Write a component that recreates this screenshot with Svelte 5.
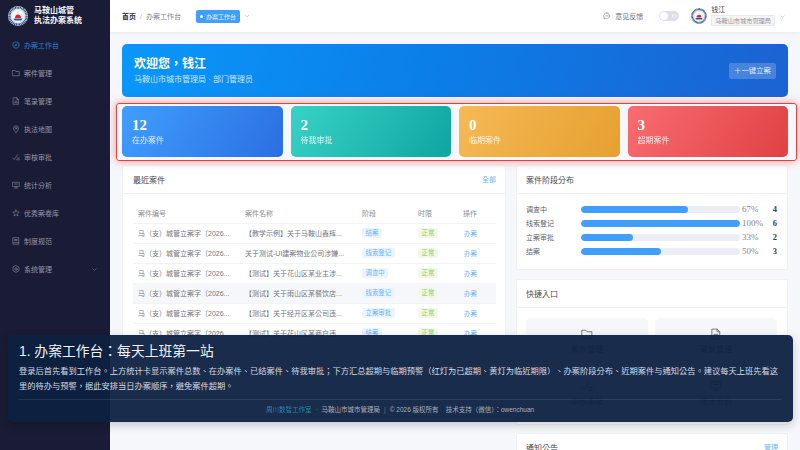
<script>
  const nav = [
    { label: '办案工作台', icon: 'gauge', active: true },
    { label: '案件管理', icon: 'folder' },
    { label: '笔录管理', icon: 'doc' },
    { label: '执法地图', icon: 'pin' },
    { label: '审核审批', icon: 'check' },
    { label: '统计分析', icon: 'chart' },
    { label: '优秀案卷库', icon: 'star' },
    { label: '制度规范', icon: 'book' },
    { label: '系统管理', icon: 'gear', arrow: true }
  ];

  const stats = [
    { value: 12, label: '在办案件', tone: 'blue' },
    { value: 2, label: '待我审批', tone: 'teal' },
    { value: 0, label: '临期案件', tone: 'orange' },
    { value: 3, label: '超期案件', tone: 'red' }
  ];

  const cases = [
    { name: '【教学示例】关于马鞍山鑫辉...', stage: '结案' },
    { name: '关于测试-UI建案物业公司涉嫌...', stage: '线索登记' },
    { name: '【测试】关于花山区某业主涉...', stage: '调查中' },
    { name: '【测试】关于雨山区某餐饮店...', stage: '线索登记', hover: true },
    { name: '【测试】关于经开区某公司违...', stage: '立案审批' },
    { name: '【测试】关于花山区某商户违...', stage: '结案' }
  ];

  const stages = [
    { label: '调查中', pct: 67, count: 4 },
    { label: '线索登记', pct: 100, count: 6 },
    { label: '立案审批', pct: 33, count: 2 },
    { label: '结案', pct: 50, count: 3 }
  ];

  const quick = [
    { label: '案件管理', icon: 'folder' },
    { label: '笔录管理', icon: 'doc' },
    { label: '审核审批', icon: 'check' },
    { label: '统计分析', icon: 'chart' }
  ];
</script>

{#snippet icon(name)}
  <svg viewBox="0 0 16 16" fill="none" stroke="currentColor" stroke-width="1.1" stroke-linejoin="round" stroke-linecap="round">
    {#if name === 'gauge'}
      <circle cx="8" cy="8" r="6.5" stroke-width="1.4" />
      <path d="M5 11 L10.5 5 M8 9.5 a1.3 1.3 0 1 0 -1.6 -1.4" stroke-width="1.3" />
    {:else if name === 'folder'}
      <path d="M1.5 3 H6.5 L8 5 H14.5 V13.5 H1.5 Z" />
    {:else if name === 'doc'}
      <path d="M3 1.5 H9.5 L13 5 V14.5 H3 Z M9.5 1.5 V5 H13" />
      <path d="M5.5 8.5 H10.5 M5.5 11 H10.5" />
    {:else if name === 'pin'}
      <path d="M8 14.8 C5 11.5 3 9.2 3 6.5 A5 5 0 0 1 13 6.5 C13 9.2 11 11.5 8 14.8 Z" />
      <circle cx="8" cy="6.5" r="1.8" />
    {:else if name === 'check'}
      <path d="M1.5 10 L4.5 13 L11 3.5 M9 13.5 H15 M11 10 H15" />
    {:else if name === 'chart'}
      <path d="M1.5 2.5 H14.5 V11 H1.5 Z M5 14 H11 M8 11 V14 M4.5 6 H11.5" />
    {:else if name === 'star'}
      <path d="M8 1.8 L9.9 5.9 L14.4 6.4 L11.1 9.4 L12 13.9 L8 11.7 L4 13.9 L4.9 9.4 L1.6 6.4 L6.1 5.9 Z" />
    {:else if name === 'book'}
      <path d="M2.5 1.5 H13.5 V14.5 H2.5 Z M2.5 11.5 H13.5 M5.5 5 H10.5 V7.5 H5.5 Z" />
    {:else if name === 'gear'}
      <path d="M8 1.2 L14 4.6 V11.4 L8 14.8 L2 11.4 V4.6 Z" />
      <circle cx="8" cy="8" r="2.5" />
    {:else if name === 'chat'}
      <path d="M8 2 A6 5.6 0 1 1 4.6 12.6 L2 14 L2.6 11 A6 5.6 0 0 1 8 2 Z M5.2 7.8 H10.8" />
    {/if}
  </svg>
{/snippet}

{#snippet chevron()}
  <svg class="chevron" viewBox="0 0 10 6" fill="none" stroke="currentColor" stroke-width="0.9"><path d="M1 1 L5 5 L9 1" /></svg>
{/snippet}

{#snippet emblem()}
  <svg viewBox="0 0 40 40">
    <circle cx="20" cy="20" r="20" fill="#dfe6ee" />
    <circle cx="20" cy="20" r="17" fill="none" stroke="#2a4a78" stroke-width="4.5" stroke-dasharray="2 1.2" />
    <circle cx="20" cy="20" r="12" fill="#f4f6f8" />
    <path d="M11 25 H29 L27 29 H13 Z" fill="#2a5a96" />
    <path d="M14 24 A6 7 0 0 1 26 24 Z" fill="#d8262c" />
    <path d="M20 11 L21 13.5 H19 Z" fill="#e6b422" />
  </svg>
{/snippet}

<div class="app">
  <aside class="sidebar">
    <div class="brand">
      <span class="logo">{@render emblem()}</span>
      <div class="brand-name">马鞍山城管<br />执法办案系统</div>
    </div>
    <nav>
      {#each nav as item}
        <div class="nav-item" class:active={item.active}>
          <span class="nav-icon">{@render icon(item.icon)}</span>
          <span>{item.label}</span>
          {#if item.arrow}<span class="nav-arrow">{@render chevron()}</span>{/if}
        </div>
      {/each}
    </nav>
  </aside>

  <div class="main">
    <header class="topbar">
      <div class="crumbs">
        <b>首页</b><i>/</i><span>办案工作台</span>
      </div>
      <div class="tab"><em></em>办案工作台</div>
      <span class="tab-arrow">{@render chevron()}</span>
      <div class="top-right">
        <span class="feedback"><span class="chat">{@render icon('chat')}</span>意见反馈</span>
        <span class="switch"><em></em><u></u></span>
        <span class="avatar">{@render emblem()}</span>
        <div class="user">
          <div class="user-name">钱江</div>
          <div class="user-org">马鞍山市城市管理局</div>
        </div>
        <span class="user-arrow">{@render chevron()}</span>
      </div>
    </header>

    <main class="content">
      <section class="banner">
        <div>
          <h1>欢迎您，钱江</h1>
          <p>马鞍山市城市管理局 · 部门管理员</p>
        </div>
        <div class="banner-btn">＋一键立案</div>
      </section>

      <section class="stats">
        {#each stats as s}
          <div class="stat {s.tone}">
            <strong>{s.value}</strong>
            <span>{s.label}</span>
          </div>
        {/each}
      </section>

      <div class="columns">
        <section class="card recent">
          <div class="card-head"><span>最近案件</span><a href="#all">全部</a></div>
          <div class="table-wrap">
            <table>
              <thead>
                <tr><th>案件编号</th><th>案件名称</th><th>阶段</th><th>时限</th><th>操作</th></tr>
              </thead>
              <tbody>
                {#each cases as c}
                  <tr class:hover={c.hover}>
                    <td>马（支）城管立案字〔2026...</td>
                    <td>{c.name}</td>
                    <td><span class="tag">{c.stage}</span></td>
                    <td><span class="tag ok">正常</span></td>
                    <td><span class="link">办案</span></td>
                  </tr>
                {/each}
              </tbody>
            </table>
          </div>
        </section>

        <div class="side">
          <section class="card dist">
            <div class="card-head"><span>案件阶段分布</span></div>
            <div class="bars">
              {#each stages as b}
                <div class="bar-row">
                  <span class="bar-label">{b.label}</span>
                  <span class="track"><span class="fill" style="width: {b.pct}%"></span></span>
                  <span class="pct">{b.pct}%</span>
                  <b>{b.count}</b>
                </div>
              {/each}
            </div>
          </section>

          <section class="card quick">
            <div class="card-head"><span>快捷入口</span></div>
            <div class="quick-grid">
              {#each quick as q}
                <div class="quick-item">
                  <span class="quick-icon">{@render icon(q.icon)}</span>
                  <span>{q.label}</span>
                </div>
              {/each}
            </div>
          </section>

          <section class="card notice">
            <div class="card-head"><span>通知公告</span><a href="#manage">管理</a></div>
          </section>
        </div>
      </div>
    </main>
  </div>

  <div class="tour">
    <h2>1. 办案工作台：每天上班第一站</h2>
    <p>登录后首先看到工作台。上方统计卡显示案件总数、在办案件、已结案件、待我审批；下方汇总超期与临期预警（红灯为已超期、黄灯为临近期限）、办案阶段分布、近期案件与通知公告。建议每天上班先看这里的待办与预警，据此安排当日办案顺序，避免案件超期。</p>
    <footer>
      <span class="studio">周川数智工作室</span><span class="sep">·</span>马鞍山市城市管理局<span class="sep">|</span>© 2026 版权所有<span class="gap"></span>技术支持（微信）：owenchuan
    </footer>
  </div>
</div>

<style>
  :global(body) {
    margin: 0;
    background: #f5f7fb;
  }

  .app {
    position: relative;
    display: grid;
    grid-template-columns: 110px 1fr;
    width: 800px;
    height: 450px;
    overflow: hidden;
    font-family: "Liberation Sans", "Noto Sans CJK TC", sans-serif;
    color: #303133;
  }

  svg {
    display: block;
    width: 100%;
    height: 100%;
  }

  .sidebar {
    background: #1a1c35;
    color: #9296a6;
  }

  .brand {
    display: flex;
    align-items: center;
    gap: 6px;
    height: 31px;
    padding-left: 8px;
  }

  .logo {
    width: 20px;
    height: 20px;
  }

  .brand-name {
    color: #f2f3f6;
    font-size: 8px;
    font-weight: 700;
    line-height: 10px;
  }

  .nav-item {
    display: flex;
    align-items: center;
    gap: 4px;
    height: 28px;
    padding: 0 8px 0 12px;
    font-size: 7px;
  }

  .nav-item.active {
    color: #2a7ed3;
  }

  .nav-icon {
    width: 8px;
    height: 8px;
  }

  .nav-arrow {
    margin-left: auto;
    width: 5px;
    margin-right: 5px;
  }

  .chevron {
    height: auto;
  }

  .main {
    display: flex;
    flex-direction: column;
    min-width: 0;
  }

  .topbar {
    display: flex;
    align-items: center;
    flex: none;
    height: 32px;
    padding-left: 12px;
    background: #fff;
    box-shadow: 0 1px 3px rgba(0, 0, 0, 0.06);
    font-size: 7px;
    position: relative;
  }

  .crumbs {
    display: flex;
    align-items: center;
    color: #80848c;
  }

  .crumbs b {
    color: #303133;
  }

  .crumbs i {
    margin: 0 4px;
    color: #b0b3b9;
    font-style: normal;
  }

  .tab {
    display: flex;
    align-items: center;
    gap: 2px;
    height: 13px;
    margin-left: 15px;
    padding: 0 4px;
    background: #409eff;
    border-radius: 2px;
    color: #e8f3ff;
    font-size: 6px;
  }

  .tab em {
    width: 3px;
    height: 3px;
    margin-right: 1px;
    background: #fff;
    border-radius: 50%;
  }

  .tab-arrow {
    width: 6px;
    margin-left: 4px;
    color: #a0a4ab;
  }

  .top-right {
    display: flex;
    align-items: center;
    margin-left: auto;
  }

  .feedback {
    display: flex;
    align-items: center;
    gap: 4px;
    color: #6a6e75;
  }

  .chat {
    width: 8px;
    height: 8px;
  }

  .switch {
    display: flex;
    align-items: center;
    justify-content: space-between;
    width: 20px;
    height: 10px;
    margin-left: 16px;
    padding: 0 3.5px 0 1px;
    box-sizing: border-box;
    background: #dcdfe6;
    border-radius: 5px;
  }

  .switch em {
    display: block;
    width: 8px;
    height: 8px;
    background: #fff;
    border-radius: 50%;
  }

  .switch u {
    display: block;
    width: 2px;
    height: 2px;
    border: 0.5px solid #f2f3f6;
    border-radius: 50%;
  }

  .avatar {
    width: 16px;
    height: 16px;
    margin-left: 12px;
  }

  .user {
    margin-left: 4px;
  }

  .user-name {
    font-size: 7px;
    line-height: 8px;
    color: #404348;
  }

  .user-org {
    height: 9px;
    margin-top: 1px;
    padding: 0 3px;
    background: #f4f4f5;
    border: 0.5px solid #e9e9eb;
    border-radius: 1px;
    color: #909399;
    font-size: 6.2px;
    line-height: 9px;
  }

  .user-arrow {
    width: 5px;
    margin: 0 15px 0 5px;
    color: #9a9ea5;
  }

  .content {
    flex: 1;
    padding: 12px 12px 0;
    background: #f5f7fb;
    min-height: 0;
  }

  .banner {
    display: flex;
    align-items: center;
    justify-content: space-between;
    height: 53px;
    padding: 0 12px;
    box-sizing: border-box;
    background: linear-gradient(100deg, #0a97fa 0%, #0b7fe8 45%, #1c62d2 100%);
    border-radius: 5px;
    color: #fff;
  }

  .banner h1 {
    margin: 0;
    font-size: 12px;
    line-height: 16px;
    font-weight: 700;
  }

  .banner p {
    margin: 2px 0 0;
    font-size: 8px;
    line-height: 11px;
    color: #cfe6fb;
  }

  .banner-btn {
    padding: 0 5px;
    height: 16px;
    line-height: 16px;
    background: rgba(255, 255, 255, 0.2);
    border-radius: 2px;
    font-size: 7.4px;
    color: #dcecfb;
  }

  .stats {
    position: relative;
    display: grid;
    grid-template-columns: repeat(4, 1fr);
    gap: 8px;
    height: 51px;
    margin-top: 9px;
  }

  .stats::after {
    content: "";
    position: absolute;
    inset: -3px -9px -4px -6px;
    border: 1.5px solid #e5403f;
    border-radius: 3px;
    box-shadow: 0 0 8px rgba(240, 60, 60, 0.55);
    z-index: 2;
    pointer-events: none;
  }

  .stat {
    display: flex;
    flex-direction: column;
    justify-content: center;
    padding: 0 10px 2px;
    border-radius: 5px;
    color: #fff;
  }

  .stat strong {
    font-family: "Liberation Serif", serif;
    font-size: 15px;
    line-height: 20px;
  }

  .stat span {
    font-size: 8px;
    line-height: 12px;
    opacity: 0.85;
  }

  .blue { background: linear-gradient(120deg, #409eff, #2b6fe0); }
  .teal { background: linear-gradient(120deg, #38d2c6, #0fa5a0); }
  .orange { background: linear-gradient(120deg, #f6b955, #e5a030); }
  .red { background: linear-gradient(120deg, #f96c70, #e04144); }

  .columns {
    display: grid;
    grid-template-columns: 384px 272px;
    gap: 10px;
    margin-top: 8px;
    align-items: start;
  }

  .card {
    background: #fff;
    border: 1px solid #eef0f4;
    border-radius: 2px;
    box-sizing: border-box;
  }

  .card-head {
    display: flex;
    align-items: center;
    justify-content: space-between;
    height: 28px;
    padding: 0 9px 1px;
    box-sizing: border-box;
    border-bottom: 1px solid #eef0f4;
    font-size: 8px;
    color: #45484e;
  }

  .card-head a {
    color: #6cb2fb;
    font-size: 7px;
    text-decoration: none;
  }

  .recent {
    height: 254px;
  }

  .recent .card-head {
    padding-left: 10px;
  }

  .table-wrap {
    padding: 9px 9px 0 10px;
  }

  table {
    width: 100%;
    table-layout: fixed;
    border-collapse: collapse;
    font-size: 7px;
    color: #74777e;
  }

  th, td {
    height: 20px;
    padding: 0;
    border-bottom: 1px solid #f1f3f6;
    box-sizing: border-box;
    text-align: left;
    font-weight: 400;
    white-space: nowrap;
    overflow: hidden;
  }

  th {
    color: #8b8e95;
  }

  th:nth-child(1), td:nth-child(1) { width: 107px; padding-left: 5px; }
  th:nth-child(2), td:nth-child(2) { width: 122px; padding-left: 5px; }
  th:nth-child(3), td:nth-child(3) { width: 56px; }
  th:nth-child(4), td:nth-child(4) { width: 45px; }

  tr.hover td {
    background: #f5f7fa;
  }

  .tag {
    display: inline-block;
    height: 10px;
    padding: 0 3.5px;
    background: #ecf5ff;
    border-radius: 2px;
    color: #6bb2fb;
    font-size: 6.4px;
    line-height: 10px;
    vertical-align: middle;
  }

  .tag.ok {
    background: #eff8e9;
    color: #8ccb63;
  }

  .link {
    margin-left: 1px;
    color: #6bb2fb;
    font-size: 6.4px;
  }

  .side {
    display: flex;
    flex-direction: column;
    gap: 8px;
  }

  .dist {
    height: 105px;
    margin-bottom: 1px;
  }

  .bars {
    padding: 8px 9px 0;
  }

  .bar-row {
    display: flex;
    align-items: center;
    height: 14px;
    font-size: 7px;
    color: #5c5f66;
  }

  .bar-label {
    width: 55px;
    flex: none;
  }

  .track {
    width: 159px;
    height: 7px;
    flex: none;
    background: #ebeef5;
    border-radius: 4px;
    overflow: hidden;
  }

  .fill {
    display: block;
    height: 100%;
    background: #409eff;
    border-radius: 4px;
  }

  .pct {
    width: 28px;
    margin-left: 2px;
    flex: none;
    font-family: "Liberation Serif", serif;
    font-size: 9px;
    color: #85888f;
  }

  .bar-row b {
    width: 7px;
    flex: none;
    text-align: right;
    font-family: "Liberation Serif", serif;
    font-size: 8.5px;
    color: #3d4047;
  }

  .quick {
    height: 146px;
  }

  .quick-grid {
    display: grid;
    grid-template-columns: 122px 122px;
    grid-auto-rows: 47px;
    gap: 5px 7px;
    padding: 10px 9px 0;
  }

  .quick-item {
    display: flex;
    flex-direction: column;
    align-items: center;
    justify-content: center;
    gap: 4px;
    background: #f5f7fa;
    border-radius: 5px;
    font-size: 8px;
    line-height: 11px;
    color: #606266;
  }

  .quick-icon {
    width: 12px;
    height: 12px;
  }

  .notice {
    height: 60px;
  }

  .tour {
    position: absolute;
    left: 8px;
    top: 335px;
    width: 785px;
    height: 87px;
    padding: 8px 12px 0 11px;
    box-sizing: border-box;
    background: rgba(14, 33, 65, 0.95);
    border-radius: 5px;
    box-shadow: 0 3px 10px rgba(0, 0, 0, 0.2);
    color: #e6eaf0;
    z-index: 5;
  }

  .tour h2 {
    margin: 0;
    font-size: 13.8px;
    line-height: 18px;
    font-weight: 400;
    color: #f0f3f7;
  }

  .tour p {
    margin: 3px 0 0;
    font-size: 8.25px;
    line-height: 15px;
    color: #d5dae2;
  }

  .tour footer {
    margin-top: 5px;
    padding-top: 5px;
    border-top: 1px solid rgba(255, 255, 255, 0.09);
    font-size: 6.5px;
    line-height: 10px;
    text-align: center;
    color: #a9b0bb;
  }

  .studio {
    background: linear-gradient(90deg, #2f7fd0, #1f9aa8);
    -webkit-background-clip: text;
    background-clip: text;
    color: transparent;
  }

  .sep {
    margin: 0 4px;
    color: #6b7483;
  }

  .gap {
    display: inline-block;
    width: 7px;
  }
</style>
